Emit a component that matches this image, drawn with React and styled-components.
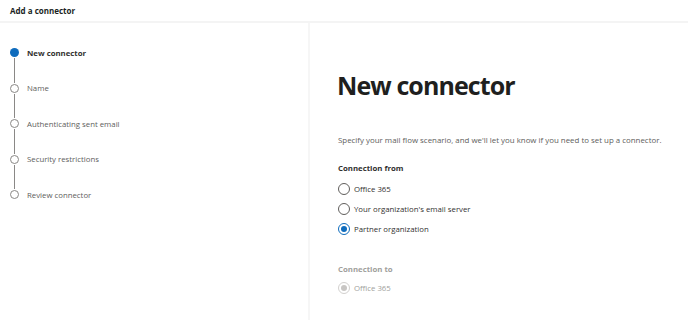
import React from 'react';
import styled, { createGlobalStyle } from 'styled-components';

const GlobalStyle = createGlobalStyle`
  html, body {
    margin: 0;
    padding: 0;
    background: #ffffff;
  }
  body {
    font-family: "Open Sans", "Noto Sans", "Liberation Sans", sans-serif;
    color: #323130;
  }
`;

const Page = styled.div`
  width: 688px;
  height: 320px;
  display: flex;
  flex-direction: column;
  overflow: hidden;
`;

const Header = styled.div`
  height: 21px;
  display: flex;
  align-items: center;
  padding-left: 10px;
  font-size: 8px;
  font-weight: 700;
  color: #201f1e;
  border-bottom: 2px solid #f4f4f4;
`;

const Body = styled.div`
  flex: 1;
  display: flex;
`;

const Sidebar = styled.div`
  width: 310px;
  border-right: 2px solid #f6f6f6;
  padding-top: 24px;
  padding-left: 10px;
  box-sizing: border-box;
`;

const Step = styled.div`
  display: flex;
  align-items: center;
  height: 11px;
  gap: 8px;
`;

const Dot = styled.span`
  width: 9px;
  height: 9px;
  border-radius: 50%;
  box-sizing: border-box;
  flex: none;
  background: ${p => (p.$active ? '#0f6cbd' : '#ffffff')};
  border: ${p => (p.$active ? 'none' : '1.5px solid #8a8886')};
`;

const StepLabel = styled.span`
  font-size: 7.8px;
  font-weight: ${p => (p.$active ? 700 : 400)};
  color: ${p => (p.$active ? '#323130' : '#605e5c')};
`;

const Connector = styled.div`
  width: 1px;
  height: 24.5px;
  margin-left: 4px;
  background: #8a8886;
`;

const Main = styled.div`
  flex: 1;
  padding-left: 28px;
  padding-top: 45px;
`;

const Title = styled.h1`
  margin: 0 0 0 -1px;
  font-size: 25px;
  font-weight: 700;
  color: #201f1e;
  line-height: 34px;
  letter-spacing: -0.9px;
`;

const Description = styled.p`
  margin: 33px 0 0;
  font-size: 7.9px;
  color: #605e5c;
  line-height: 10px;
`;

const GroupLabel = styled.div`
  margin-top: ${p => p.$gap}px;
  font-size: 7.8px;
  font-weight: 700;
  color: ${p => (p.$disabled ? '#a19f9d' : '#323130')};
  line-height: 10px;
`;

const Options = styled.div`
  display: flex;
  flex-direction: column;
  gap: 8px;
  margin-top: ${p => p.$top}px;
`;

const Option = styled.label`
  display: flex;
  align-items: center;
  gap: 4px;
  height: 12px;
  font-size: 7.8px;
  color: ${p => (p.$disabled ? '#a19f9d' : '#323130')};
`;

const Radio = styled.span`
  width: 12px;
  height: 12px;
  border-radius: 50%;
  box-sizing: border-box;
  flex: none;
  display: flex;
  align-items: center;
  justify-content: center;
  border: 1px solid
    ${p => (p.$disabled ? '#d2d0ce' : p.$checked ? '#0f6cbd' : '#605e5c')};
  background: #ffffff;

  &::after {
    content: '';
    width: 6px;
    height: 6px;
    border-radius: 50%;
    display: ${p => (p.$checked ? 'block' : 'none')};
    background: ${p => (p.$disabled ? '#c8c6c4' : '#0f6cbd')};
  }
`;

const steps = [
  'New connector',
  'Name',
  'Authenticating sent email',
  'Security restrictions',
  'Review connector'
];

const fromOptions = [
  { label: 'Office 365' },
  { label: "Your organization's email server" },
  { label: 'Partner organization', checked: true }
];

export default function App() {
  return (
    <Page>
      <GlobalStyle />
      <Header>Add a connector</Header>
      <Body>
        <Sidebar>
          {steps.map((step, i) => (
            <React.Fragment key={step}>
              {i > 0 && <Connector />}
              <Step>
                <Dot $active={i === 0} />
                <StepLabel $active={i === 0}>{step}</StepLabel>
              </Step>
            </React.Fragment>
          ))}
        </Sidebar>
        <Main>
          <Title>New connector</Title>
          <Description>
            Specify your mail flow scenario, and we'll let you know if you need to set up a connector.
          </Description>
          <GroupLabel $gap={18}>Connection from</GroupLabel>
          <Options $top={10}>
            {fromOptions.map(opt => (
              <Option key={opt.label}>
                <Radio $checked={opt.checked} />
                {opt.label}
              </Option>
            ))}
          </Options>
          <GroupLabel $gap={29} $disabled>Connection to</GroupLabel>
          <Options $top={8}>
            <Option $disabled>
              <Radio $checked $disabled />
              Office 365
            </Option>
          </Options>
        </Main>
      </Body>
    </Page>
  );
}
